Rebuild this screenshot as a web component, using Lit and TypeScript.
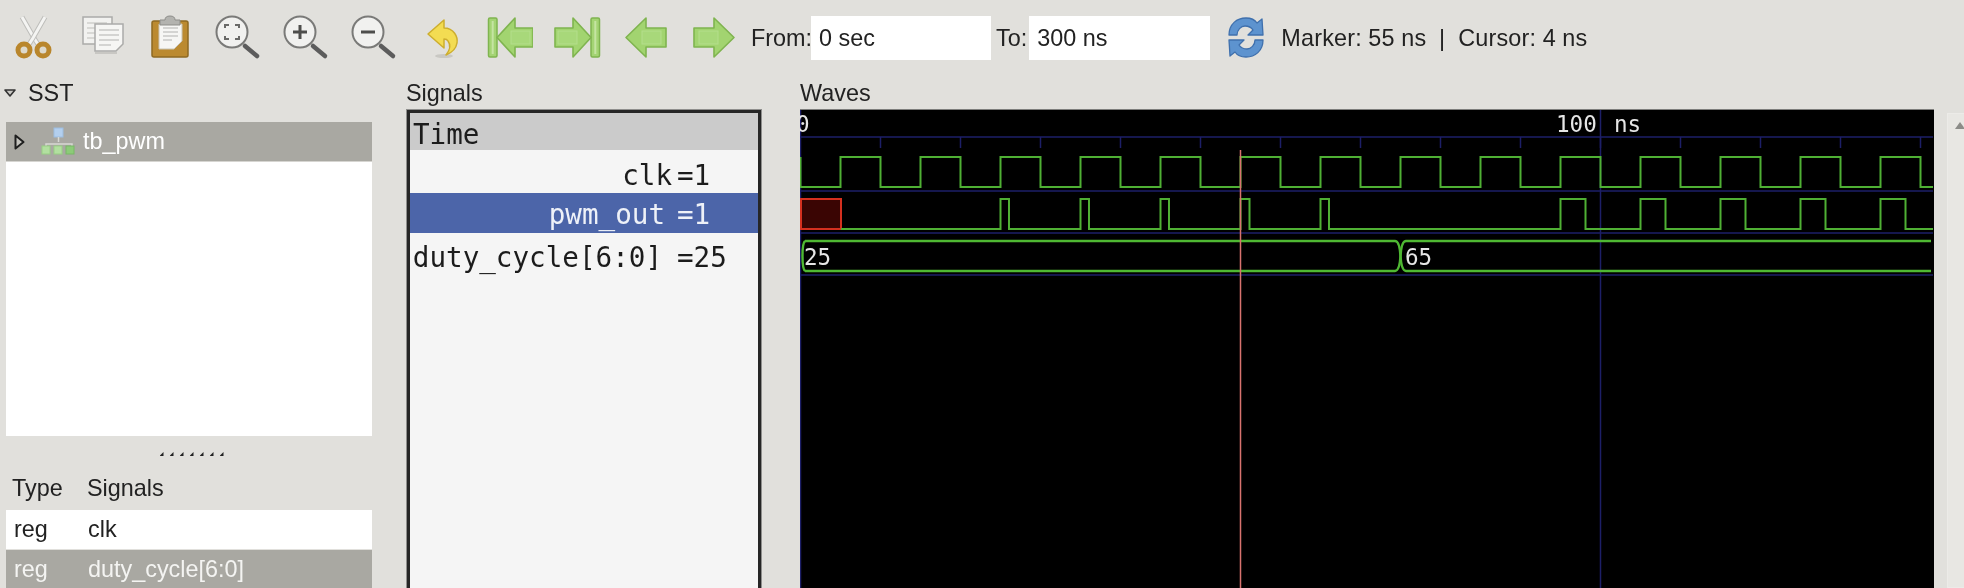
import { LitElement, html, svg, css } from 'lit';
import { customElement } from 'lit/decorators.js';

// wave canvas uses screen x/y, 8px per ns
const LEFT = 800.5;
const RIGHT = 1933;
const HALF = 40;

const clkPoints = () => {
  const pts: string[] = [`${LEFT},157`, `${LEFT},187`];
  let x = LEFT + HALF;
  let high = false;
  pts.push(`${x},187`);
  while (x < RIGHT) {
    const y0 = high ? 157 : 187;
    const y1 = high ? 187 : 157;
    pts.push(`${x},${y0}`, `${x},${y1}`);
    x += HALF;
    high = !high;
    pts.push(`${Math.min(x, RIGHT)},${y1}`);
  }
  return pts.join(' ');
};

const pwmPulses: [number, number][] = [
  [1000.5, 1009], [1080.5, 1089], [1160.5, 1169], [1240.5, 1249.5], [1320.5, 1329],
  [1560.5, 1585.5], [1640.5, 1665.5], [1720.5, 1745.5], [1800.5, 1825.5], [1880.5, 1905.5],
];

const pwmPoints = () => {
  const pts: string[] = ['841,229'];
  for (const [a, b] of pwmPulses) {
    pts.push(`${a},229`, `${a},199`, `${b},199`, `${b},229`);
  }
  pts.push(`${RIGHT},229`);
  return pts.join(' ');
};

const ticks = () => {
  const out = [];
  for (let x = 880.5; x < RIGHT; x += 80) {
    out.push(svg`<line class="grid" x1=${x} x2=${x} y1="137" y2="148"></line>`);
  }
  return out;
};

const waves = svg`
  <svg class="canvas" width="1134" height="478" viewBox="800 110 1134 478">
    <rect x="800" y="110" width="1134" height="478" fill="#000"></rect>
    <line class="grid" x1="800" x2="1933" y1="137" y2="137"></line>
    <line class="grid" x1="800" x2="1933" y1="191" y2="191"></line>
    <line class="grid" x1="800" x2="1933" y1="233" y2="233"></line>
    <line class="grid" x1="800" x2="1933" y1="275" y2="275"></line>
    <line class="grid" x1="800.5" x2="800.5" y1="110" y2="588"></line>
    <line class="grid" x1="1600.5" x2="1600.5" y1="110" y2="588"></line>
    ${ticks()}
    <polyline class="wave" points=${clkPoints()}></polyline>
    <rect x="801" y="199" width="40" height="30" fill="#3a0503" stroke="#d5301f" stroke-width="2"></rect>
    <polyline class="wave" points=${pwmPoints()}></polyline>
    <path class="bus" d="M805 241 L1395 241 Q1399.5 241 1400.5 256 Q1401.5 271 1406 271 L1931 271"></path>
    <path class="bus" d="M805 271 L1395 271 Q1399.5 271 1400.5 256 Q1401.5 241 1406 241 L1931 241"></path>
    <path class="bus" d="M805 241 Q802.5 243 802.5 256 Q802.5 269 805 271"></path>
    <line x1="1240.5" x2="1240.5" y1="150" y2="588" stroke="#d9736f" stroke-width="1.5"></line>
    <text class="t" x="796" y="132">0</text>
    <text class="t" x="1556" y="132">100</text>
    <text class="t" x="1614" y="132">ns</text>
    <text class="t" x="804" y="265">25</text>
    <text class="t" x="1405" y="265">65</text>
  </svg>`;

const arrowPath = 'M5 24.5 L25 5 L25 15 L45 15 L45 34 L25 34 L25 44 Z';
const firstPath = 'M12 24.5 L30 5 L30 15 L48 15 L48 34 L30 34 L30 44 Z';

const greenBar = (flip: boolean, path: string, bar: boolean) => svg`
  <g transform=${flip ? 'translate(50,0) scale(-1,1)' : ''}>
    ${bar ? svg`<rect x="3.5" y="5" width="8.5" height="39" rx="1.5" fill="#a4d474" stroke="#7fb44f" stroke-width="1.5"></rect>
      <line x1="7.7" x2="7.7" y1="8" y2="41" stroke="#c5e4a2" stroke-width="2"></line>` : ''}
    <path d=${path} fill="#a2d470" stroke="#7fb44f" stroke-width="1.6" stroke-linejoin="round"></path>
    <rect x=${bar ? 26 : 21} y="18" width="19" height="13" fill="#a8d87a" stroke="#b4de8c" stroke-width="1"></rect>
  </g>`;

const lens = (inner: unknown) => svg`
  <line x1="32" y1="33" x2="44" y2="43" stroke="#5c5c5c" stroke-width="4.5" stroke-linecap="round"></line>
  <circle cx="19" cy="19" r="15.5" fill="#f1f1ef" stroke="#7a7a78" stroke-width="2"></circle>
  ${inner}`;

const icons = [
  // cut
  svg`<path d="M13 4 L25 25 L30 33" fill="none" stroke="#bdbdba" stroke-width="5"></path>
    <path d="M13 4 L25 25 L30 33" fill="none" stroke="#f4f4f2" stroke-width="3"></path>
    <path d="M36 4 L24 25 L19 33" fill="none" stroke="#bdbdba" stroke-width="5"></path>
    <path d="M36 4 L24 25 L19 33" fill="none" stroke="#f4f4f2" stroke-width="3"></path>
    <circle cx="15" cy="37" r="6" fill="#ddd9cc" stroke="#b9862c" stroke-width="5"></circle>
    <circle cx="34" cy="37" r="6" fill="#ddd9cc" stroke="#b9862c" stroke-width="5"></circle>`,
  // copy
  svg`<rect x="6" y="4" width="29" height="27" fill="#f2f2f0" stroke="#ababa9" stroke-width="1.5"></rect>
    <path d="M10 10h20M10 15h8M10 20h8M10 25h8" stroke="#cfcfcc" stroke-width="1.5"></path>
    <path d="M18 11 H46 V31 L39 38 H18 Z" fill="#f6f6f4" stroke="#ababa9" stroke-width="1.5"></path>
    <path d="M22 17h20M22 22h20M22 27h20M22 32h12" stroke="#c9c9c6" stroke-width="1.5"></path>
    <path d="M18 40 H40" stroke="#c8c7c3" stroke-width="2"></path>`,
  // paste
  svg`<rect x="7" y="8" width="36" height="36" rx="2" fill="#bb8a30" stroke="#8f6a22" stroke-width="1.5"></rect>
    <path d="M14 11 H37 V28 L29 36 H14 Z" fill="#f6f6f4" stroke="#c9c4b5"></path>
    <path d="M18 15h15M18 19h15M18 23h15M18 27h9" stroke="#c9c9c6" stroke-width="1.5"></path>
    <path d="M15 12 V7 H20 Q20 3 25 3 Q30 3 30 7 H35 V12 Z" fill="#b3b3af" stroke="#8d8d89"></path>`,
  // zoom fit
  lens(svg`<path d="M12 15v-3h4M22 12h4v3M26 23v3h-4M16 26h-4v-3" fill="none" stroke="#6a6a68" stroke-width="2"></path>`),
  // zoom in
  lens(svg`<path d="M12 19h14M19 12v14" fill="none" stroke="#4e4e4c" stroke-width="3"></path>`),
  // zoom out
  lens(svg`<path d="M12 19h14" fill="none" stroke="#4e4e4c" stroke-width="3"></path>`),
  // undo
  svg`<ellipse cx="27" cy="43" rx="9" ry="2" fill="#c9c8c3"></ellipse>
    <path d="M11 21 L27 7 L27 15 C37 15 41 24 40 30 C39 36 34 40 29 42 C33 37 34 32 31 28 C30 26 28 26 27 26 L27 35 Z" fill="#f3dc52" stroke="#cdae2e" stroke-width="1.5" stroke-linejoin="round"></path>`,
  // first, last, previous, next
  greenBar(false, firstPath, true),
  greenBar(true, firstPath, true),
  greenBar(false, arrowPath, false),
  greenBar(true, arrowPath, false),
];

const refreshIcon = svg`
  <svg class="refresh" width="38" height="44" viewBox="0 0 38 44">
    <path d="M2 19 C2 8 10 2 19 2 C24 2 28 4 30 7 L35 3 L36 19 L21 19 L26 14 C24 11 21 10 18 10 C14 10 10 14 10 19 Z" fill="#5d93cf" stroke="#3f70ad" stroke-width="1.3" stroke-linejoin="round"></path>
    <path d="M36 24 C36 35 28 41 19 41 C14 41 10 39 8 36 L3 40 L2 24 L17 24 L12 29 C14 32 17 33 20 33 C24 33 28 29 28 24 Z" fill="#5d93cf" stroke="#3f70ad" stroke-width="1.3" stroke-linejoin="round"></path>
  </svg>`;

const treeIcon = svg`
  <svg width="36" height="30" viewBox="0 0 36 30">
    <rect x="13" y="1" width="9" height="9" fill="#b3cfee" stroke="#9dbde0"></rect>
    <path d="M17.5 10v5M5 20v-3h26v3" fill="none" stroke="#d8d8d4" stroke-width="1.5"></path>
    <rect x="1" y="19" width="8" height="8" fill="#b2dfa0" stroke="#98cf84"></rect>
    <rect x="13" y="19" width="8" height="8" fill="#b2dfa0" stroke="#98cf84"></rect>
    <rect x="25" y="19" width="8" height="8" fill="#8ccb78" stroke="#78b866"></rect>
  </svg>`;

const sstArrow = svg`
  <svg width="12" height="8" viewBox="0 0 12 8">
    <path d="M1 1 H11 L6 7 Z" fill="#c9c8c4" stroke="#333" stroke-width="1.6" stroke-linejoin="round"></path>
  </svg>`;

const expander = svg`
  <svg class="expander" width="11" height="16" viewBox="0 0 11 16">
    <path d="M1.5 1.5 L9.5 8 L1.5 14.5 Z" fill="#c4c3be" stroke="#1f1f1f" stroke-width="2" stroke-linejoin="round"></path>
  </svg>`;

@customElement('app-root')
export class AppRoot extends LitElement {
  static styles = css`
    :host {
      display: block;
      width: 1964px;
      height: 588px;
      overflow: hidden;
      background: #e1e0dc;
      color: #222;
      font-family: "Liberation Sans", Arial, sans-serif;
      font-size: 23.4px;
      filter: blur(0.6px);
    }

    .toolbar {
      height: 80px;
      box-sizing: border-box;
      padding: 13px 0 0 9px;
      display: flex;
      align-items: flex-start;
      gap: 20px;
    }
    .toolbar > svg { flex: none; display: block; }

    .times {
      display: flex;
      align-items: center;
      height: 44px;
      margin-top: 3px;
      margin-left: -6px;
      white-space: nowrap;
    }
    .field {
      background: #fff;
      height: 44px;
      line-height: 44px;
      box-sizing: border-box;
      padding-left: 8px;
    }
    .from { width: 180px; margin-right: 5px; margin-left: -1px; }
    .to { width: 181px; margin-left: 2px; }
    .refresh { margin: 0 16px 0 17px; flex: none; }
    .marker { letter-spacing: 0.2px; word-spacing: -0.3px; }

    .panes { display: flex; height: 508px; }

    .left { width: 372px; padding-left: 6px; box-sizing: border-box; display: flex; flex-direction: column; }
    .title { height: 30px; line-height: 26px; flex: none; }
    .sst { display: flex; align-items: center; height: 26px; margin: 0 0 16px -6px; gap: 12px; padding-left: 4px; }
    .tree { background: #fff; height: 314px; flex: none; }
    .row-sel {
      background: #a9a8a2;
      color: #fff;
      height: 40px;
      display: flex;
      align-items: center;
      box-sizing: border-box;
      border-bottom: 1px solid #d6d5d1;
    }
    .expander { margin-left: 8px; flex: none; }
    .row-sel svg:last-of-type { margin-left: 16px; }
    .row-sel span { margin-left: 6px; }
    .grip { height: 30px; display: flex; justify-content: center; align-items: center; gap: 6px; padding: 6px 0 0 5px; box-sizing: border-box; flex: none; }
    .grip b { width: 4px; height: 4px; background: #222; clip-path: polygon(0 100%, 100% 0, 100% 100%); }

    .cols { display: grid; grid-template-columns: 75px 1fr; height: 44px; align-items: center; padding-left: 6px; flex: none; }
    .list-row { display: grid; grid-template-columns: 74px 1fr; height: 39px; align-items: center; padding-left: 8px; background: #fff; flex: none; }
    .list-row.sel { background: #a9a8a2; color: #f4f4f2; margin-top: 1px; }

    .signals { width: 356px; margin-left: 34px; display: flex; flex-direction: column; }
    .sigbox {
      flex: 1;
      background: #f5f5f5;
      border: 3px solid #262626;
      border-bottom: 0;
      box-shadow: 0 0 0 1px #8f8f8d;
      margin: 0 1px 0 1px;
      font-family: "DejaVu Sans Mono", monospace;
      font-size: 27.6px;
      color: #1c1c1c;
      overflow: hidden;
    }
    .time { height: 37px; background: #cbcbcb; padding: 0 0 0 3px; line-height: 43px; margin-bottom: 1.5px; overflow: hidden; }
    .sig { display: grid; grid-template-columns: 262px 1fr; height: 39.7px; line-height: 47px; margin-bottom: 1.4px; }
    .sig .name { text-align: right; white-space: nowrap; }
    .sig .name.pad { padding-right: 10px; }
    .sig .name.pad-sm { padding-right: 7px; }
    .sig .val { padding-left: 5px; }
    .sig.on { background: #4c65a9; color: #eef1f8; line-height: 44px; height: 40.5px; margin-bottom: 0.6px; }

    .wavepane { width: 1134px; margin-left: 38px; display: flex; flex-direction: column; }
    .canvas { display: block; flex: none; border-top: 1px solid #7d7d7b; margin-top: -1px; }
    .grid { stroke: #1d1f68; stroke-width: 1.5; }
    .wave { fill: none; stroke: #4fb034; stroke-width: 2; }
    .bus { fill: none; stroke: #4fb833; stroke-width: 2.4; }
    .t { fill: #e6e6e6; font-family: "DejaVu Sans Mono", monospace; font-size: 22.6px; }

    .scroll { width: 17px; margin-left: 13px; margin-top: 33px; background: #e8e7e3; border: 1px solid #ecebe8; border-right: 0; box-sizing: border-box; }
    .scroll i { display: block; width: 0; height: 0; margin: 8px 0 0 7px; border: 5px solid transparent; border-bottom: 7px solid #8c8c88; border-top: 0; }
  `;

  render() {
    return html`
      <div class="toolbar">
        ${icons.map((icon) => html`<svg width="48" height="48" viewBox="0 0 48 48">${icon}</svg>`)}
        <div class="times">
          <span>From:</span><div class="field from">0 sec</div>
          <span>To:</span><div class="field to">300 ns</div>
          ${refreshIcon}
          <span class="marker">Marker: 55 ns&nbsp; |&nbsp; Cursor: 4 ns</span>
        </div>
      </div>
      <div class="panes">
        <div class="left">
          <div class="sst">${sstArrow}<span>SST</span></div>
          <div class="tree">
            <div class="row-sel">${expander}${treeIcon}<span>tb_pwm</span></div>
          </div>
          <div class="grip">${[0, 1, 2, 3, 4, 5, 6].map(() => html`<b></b>`)}</div>
          <div class="cols"><span>Type</span><span>Signals</span></div>
          <div class="list-row"><span>reg</span><span>clk</span></div>
          <div class="list-row sel"><span>reg</span><span>duty_cycle[6:0]</span></div>
        </div>
        <div class="signals">
          <div class="title">Signals</div>
          <div class="sigbox">
            <div class="time">Time</div>
            <div class="sig"><span class="name">clk</span><span class="val">=1</span></div>
            <div class="sig on"><span class="name pad-sm">pwm_out</span><span class="val">=1</span></div>
            <div class="sig"><span class="name pad">duty_cycle[6:0]</span><span class="val">=25</span></div>
          </div>
        </div>
        <div class="wavepane">
          <div class="title">Waves</div>
          ${waves}
        </div>
        <div class="scroll"><i></i></div>
      </div>
    `;
  }
}
